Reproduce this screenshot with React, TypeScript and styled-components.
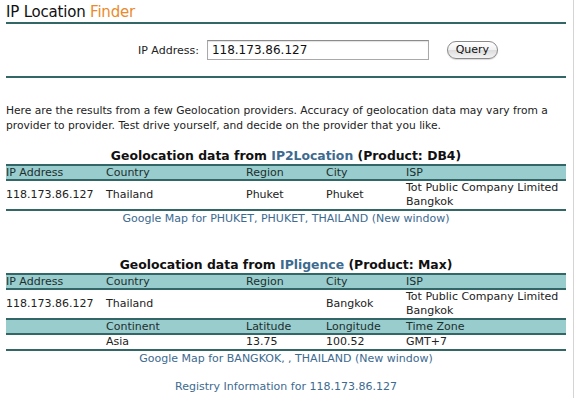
import React from 'react';
import styled, { createGlobalStyle } from 'styled-components';

const GlobalStyle = createGlobalStyle`
  html, body {
    margin: 0;
    padding: 0;
    background: #ffffff;
  }
  body {
    font-family: "DejaVu Sans", Verdana, sans-serif;
    font-size: 11px;
    color: #222222;
  }
`;

const TEAL = '#336666';
const HEAD_BG = '#99cccc';
const LINK = '#3d6a8f';

//--------------- layout
const Frame = styled.div`
  width: 574px;
  min-height: 100vh;
  border-right: 1px solid #d4d4d4;
  box-sizing: border-box;
  padding-left: 6px;
`;

const Page = styled.div`
  width: 560px;
  display: flex;
  flex-direction: column;
`;

const Title = styled.h1`
  margin: 2px 0 0;
  font-size: 15px;
  letter-spacing: -0.2px;
  font-weight: normal;
  line-height: 20px;
  color: #111111;
`;

const Orange = styled.span`
  color: #ea8a2c;
`;

const Rule = styled.div`
  height: 2px;
  background: ${TEAL};
`;

//--------------- query form
const QueryForm = styled.form`
  display: flex;
  align-items: center;
  padding: 16px 0 16px 132px;
  height: 20px;
`;

const Label = styled.label`
  font-size: 11px;
  margin-right: 8px;
`;

const IpInput = styled.input`
  width: 222px;
  height: 20px;
  box-sizing: border-box;
  border: 1px solid #a9a9a9;
  border-top-color: #8c8c8c;
  box-shadow: inset 0 1px 1px rgba(0, 0, 0, 0.12);
  padding: 0 4px;
  font-family: "DejaVu Sans", Verdana, sans-serif;
  font-size: 12px;
  color: #111111;
  margin-right: 18px;
`;

const QueryButton = styled.button`
  width: 51px;
  height: 18px;
  border-radius: 9px;
  border: 1px solid #8a8a8a;
  background: linear-gradient(#ffffff 0%, #f1f1f1 50%, #dcdcdc 51%, #f4f4f4 100%);
  box-shadow: 0 1px 1px rgba(0, 0, 0, 0.15);
  font-family: "DejaVu Sans", Verdana, sans-serif;
  font-size: 11px;
  color: #111111;
  padding: 0;
  line-height: 16px;
`;

//--------------- results
const Intro = styled.p`
  margin: 25px 0 0;
  font-size: 10.7px;
  line-height: 15px;
`;

const Section = styled.section<{ $gap: number }>`
  display: flex;
  flex-direction: column;
  margin-top: ${(p) => p.$gap}px;
`;

const Heading = styled.h2`
  margin: 0 0 1px;
  text-align: center;
  font-size: 12.4px;
  font-weight: bold;
  line-height: 14px;
  color: #111111;
`;

const Provider = styled.span`
  color: ${LINK};
`;

const Grid = styled.div`
  display: grid;
  grid-template-columns: 100px 140px 80px 80px 160px;
  border-bottom: 2px solid ${TEAL};
`;

const HeadCell = styled.div`
  background: ${HEAD_BG};
  border-top: 2px solid ${TEAL};
  border-bottom: 2px solid ${TEAL};
  line-height: 13px;
  color: #1c2f2f;
`;

const Cell = styled.div<{ $tall?: boolean }>`
  display: flex;
  flex-direction: column;
  justify-content: center;
  line-height: 14px;
  min-height: ${(p) => (p.$tall ? 28 : 13)}px;
`;

const MapLink = styled.a`
  display: block;
  text-align: center;
  line-height: 14px;
  margin-top: 1px;
  color: ${LINK};
  text-decoration: none;
`;

const Registry = styled.a`
  display: block;
  text-align: center;
  line-height: 14px;
  margin-top: 14px;
  color: ${LINK};
  text-decoration: none;
`;

//--------------- data
type Row = string[];

interface ProviderData {
  name: string;
  product: string;
  gap: number;
  groups: { head: Row; data: Row; tall: boolean }[];
  map: string;
}

const providers: ProviderData[] = [
  {
    name: 'IP2Location',
    product: 'DB4',
    gap: 16,
    groups: [
      {
        head: ['IP Address', 'Country', 'Region', 'City', 'ISP'],
        data: ['118.173.86.127', 'Thailand', 'Phuket', 'Phuket', 'Tot Public Company Limited|Bangkok'],
        tall: true,
      },
    ],
    map: 'Google Map for PHUKET, PHUKET, THAILAND (New window)',
  },
  {
    name: 'IPligence',
    product: 'Max',
    gap: 32,
    groups: [
      {
        head: ['IP Address', 'Country', 'Region', 'City', 'ISP'],
        data: ['118.173.86.127', 'Thailand', '', 'Bangkok', 'Tot Public Company Limited|Bangkok'],
        tall: true,
      },
      {
        head: ['', 'Continent', 'Latitude', 'Longitude', 'Time Zone'],
        data: ['', 'Asia', '13.75', '100.52', 'GMT+7'],
        tall: false,
      },
    ],
    map: 'Google Map for BANGKOK, , THAILAND (New window)',
  },
];

const ResultTable = ({ p }: { p: ProviderData }) => (
  <Section $gap={p.gap}>
    <Heading>
      Geolocation data from <Provider>{p.name}</Provider> (Product: {p.product})
    </Heading>
    <Grid>
      {p.groups.map((g, gi) => (
        <React.Fragment key={gi}>
          {g.head.map((h, i) => (
            <HeadCell key={'h' + i}>{h || '\u00a0'}</HeadCell>
          ))}
          {g.data.map((d, i) => (
            <Cell key={'d' + i} $tall={g.tall}>
              {d.split('|').map((line, li) => (
                <span key={li}>{line}</span>
              ))}
            </Cell>
          ))}
        </React.Fragment>
      ))}
    </Grid>
    <MapLink href="#">{p.map}</MapLink>
  </Section>
);

export default function App() {
  return (
    <>
      <GlobalStyle />
      <Frame>
        <Page>
          <Title>
            IP Location <Orange>Finder</Orange>
          </Title>
          <Rule />
          <QueryForm onSubmit={(e) => e.preventDefault()}>
            <Label>IP Address:</Label>
            <IpInput defaultValue="118.173.86.127" />
            <QueryButton type="submit">Query</QueryButton>
          </QueryForm>
          <Rule />
          <Intro>
            Here are the results from a few Geolocation providers. Accuracy of geolocation data may vary from a
            provider to provider. Test drive yourself, and decide on the provider that you like.
          </Intro>
          {providers.map((p) => (
            <ResultTable key={p.name} p={p} />
          ))}
          <Registry href="#">Registry Information for 118.173.86.127</Registry>
        </Page>
      </Frame>
    </>
  );
}
